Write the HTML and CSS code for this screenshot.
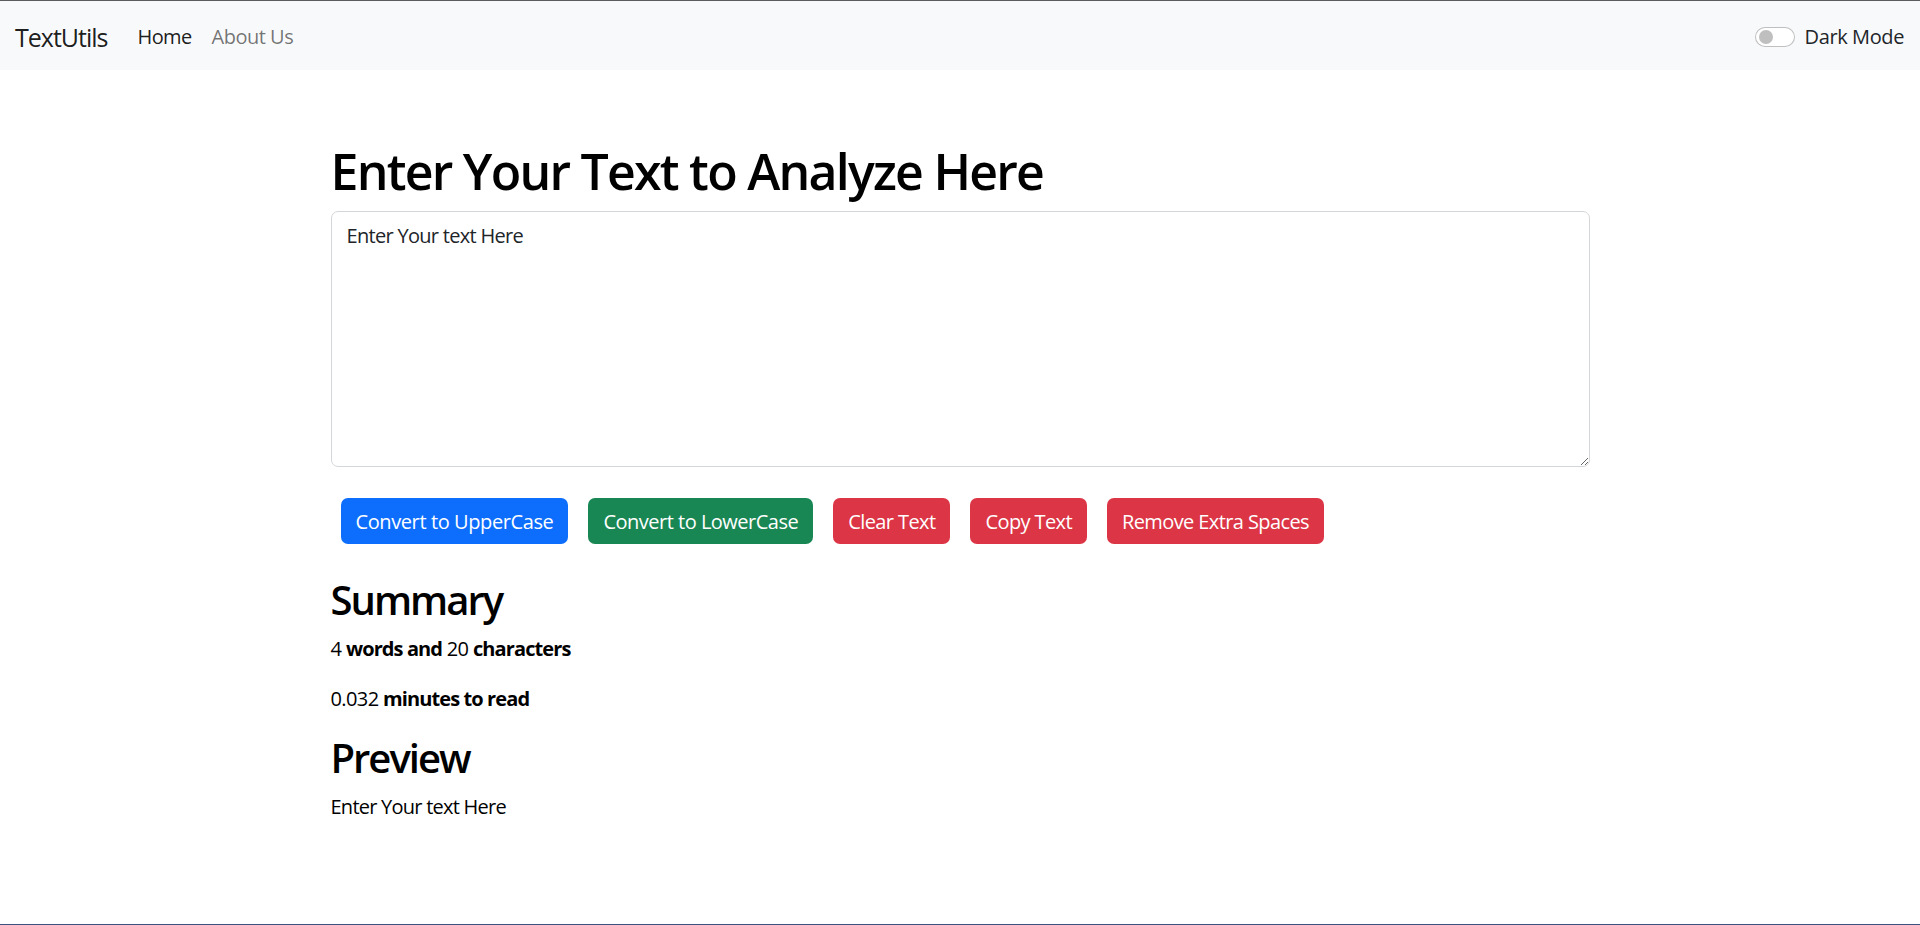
FILE: index.html
```html
<!DOCTYPE html>
<html lang="en">
<head>
<meta charset="utf-8">
<title>TextUtils</title>
<link rel="stylesheet" href="styles.css">
</head>
<body>
<div class="page">
  <nav class="navbar">
    <div class="nav-left">
      <a class="brand" href="#">TextUtils</a>
      <a class="nav-link active" href="#">Home</a>
      <a class="nav-link" href="#">About Us</a>
    </div>
    <label class="switch">
      <span class="switch-track"><span class="switch-knob"></span></span>
      <span class="switch-label">Dark Mode</span>
    </label>
  </nav>
  <main class="container">
    <h1 class="title">Enter Your Text to Analyze Here</h1>
    <textarea class="text-input">Enter Your text Here</textarea>
    <div class="actions">
      <button class="btn btn-primary">Convert to UpperCase</button>
      <button class="btn btn-success">Convert to LowerCase</button>
      <button class="btn btn-danger">Clear Text</button>
      <button class="btn btn-danger">Copy Text</button>
      <button class="btn btn-danger">Remove Extra Spaces</button>
    </div>
    <h2 class="section-title">Summary</h2>
    <p class="stat">4 <b>words and</b> 20 <b>characters</b></p>
    <p class="stat">0.032 <b>minutes to read</b></p>
    <h2 class="section-title">Preview</h2>
    <p class="preview">Enter Your text Here</p>
  </main>
</div>
</body>
</html>
```

FILE: styles.css
```css
* { box-sizing: border-box; }
html, body { margin: 0; padding: 0; height: 100%; }
body {
  font-family: "Open Sans", "Noto Sans", sans-serif;
  color: #000;
  background: #fff;
}
.page {
  min-height: 100%;
  border-top: 1px solid #5c5c5c;
  border-bottom: 1px solid #3b5180;
}
.navbar {
  height: 69px;
  background: #f8f9fa;
  display: flex;
  align-items: center;
  justify-content: space-between;
  padding: 2px 16px 0 15px;
}
.nav-left { display: flex; align-items: center; }
.brand {
  font-size: 25px;
  color: rgba(0,0,0,.9);
  text-decoration: none;
  margin-right: 20px;
  letter-spacing: -1px;
}
.nav-link {
  font-size: 20px;
  color: rgba(0,0,0,.55);
  text-decoration: none;
  padding: 0 10px;
  letter-spacing: -0.5px;
}
.nav-link.active { color: rgba(0,0,0,.9); letter-spacing: -0.6px; }
.switch { display: flex; align-items: center; gap: 10px; }
.switch-track {
  width: 40px;
  height: 20px;
  border: 1px solid rgba(0,0,0,.25);
  border-radius: 10px;
  background: #fff;
  display: flex;
  align-items: center;
  padding-left: 3px;
}
.switch-knob {
  width: 14px;
  height: 14px;
  border-radius: 50%;
  background: #bfbfbf;
}
.switch-label { font-size: 20px; color: #212529; letter-spacing: -0.4px; }
.container {
  width: 1259px;
  margin: 0 auto;
  padding-top: 71px;
}
.title {
  font-size: 50px;
  font-weight: 600;
  line-height: 60px;
  margin: 0 0 10px;
  letter-spacing: -1.75px;
}
.text-input {
  display: block;
  width: 100%;
  height: 256px;
  border: 1px solid #d4d7da;
  border-radius: 7px;
  padding: 9px 15px 7px;
  font-family: inherit;
  font-size: 20px;
  line-height: 30px;
  color: #212529;
  resize: vertical;
  letter-spacing: -0.7px;
  margin: 0;
}
.actions {
  display: flex;
  gap: 20px;
  padding: 31px 10px 0;
}
.btn {
  height: 46px;
  border: none;
  border-radius: 7px;
  padding: 0 15px;
  font-family: inherit;
  font-size: 20px;
  color: #fff;
  letter-spacing: -0.6px;
}
.btn-primary { background: #0d6efd; letter-spacing: -0.4px; }
.btn-success { background: #198754; letter-spacing: -0.5px; }
.btn-danger { background: #dc3545; }
.section-title {
  font-size: 40px;
  font-weight: 600;
  line-height: 48px;
  margin: 32px 0 10px;
  letter-spacing: -2px;
}
.stat + .section-title { margin-top: 0; }
.stat, .preview {
  font-size: 20px;
  line-height: 30px;
  margin: 0 0 20px;
  letter-spacing: -0.6px;
}
.stat b { font-weight: 700; letter-spacing: -0.9px; }
.preview { letter-spacing: -0.75px; }
```
